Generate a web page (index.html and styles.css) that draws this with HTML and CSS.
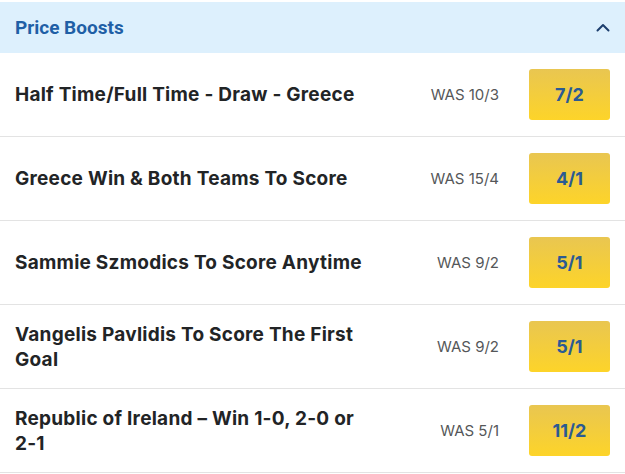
FILE: index.html
```html
<!DOCTYPE html>
<html>
<head>
<meta charset="utf-8">
<link rel="stylesheet" href="styles.css">
</head>
<body>
<div class="panel">
  <div class="header">
    <span class="header-title">Price Boosts</span>
    <svg class="chevron" width="14" height="9" viewBox="0 0 14 9"><path d="M1.5 7.5 L7 2 L12.5 7.5" fill="none" stroke="#1d3f6e" stroke-width="2" stroke-linecap="round" stroke-linejoin="round"/></svg>
  </div>
  <div class="row">
    <div class="title">Half Time/Full Time - Draw - Greece</div>
    <div class="was">WAS 10/3</div>
    <div class="odds">7/2</div>
  </div>
  <div class="row">
    <div class="title">Greece Win &amp; Both Teams To Score</div>
    <div class="was">WAS 15/4</div>
    <div class="odds">4/1</div>
  </div>
  <div class="row">
    <div class="title">Sammie Szmodics To Score Anytime</div>
    <div class="was">WAS 9/2</div>
    <div class="odds">5/1</div>
  </div>
  <div class="row">
    <div class="title">Vangelis Pavlidis To Score The First Goal</div>
    <div class="was">WAS 9/2</div>
    <div class="odds">5/1</div>
  </div>
  <div class="row">
    <div class="title">Republic of Ireland – Win <span class="nb">1-0,</span> <span class="nb">2-0</span> or <span class="nb">2-1</span></div>
    <div class="was">WAS 5/1</div>
    <div class="odds">11/2</div>
  </div>
</div>
</body>
</html>
```
FILE: styles.css
```css
html, body {
  margin: 0;
  padding: 0;
  background: #ffffff;
}
body {
  font-family: Inter, "Noto Sans", sans-serif;
  color: #222426;
}
.panel {
  padding-top: 2px;
  width: 625px;
}
.header {
  height: 51px;
  background: #ddf0fd;
  display: flex;
  align-items: center;
  justify-content: space-between;
  padding: 0 15px;
  box-sizing: border-box;
}
.header-title {
  font-family: Roboto, "Liberation Sans", sans-serif;
  font-weight: 700;
  font-size: 19px;
  color: #1f5fa6;
}
.row {
  display: flex;
  align-items: center;
  height: 84px;
  box-sizing: border-box;
  border-bottom: 1px solid #e3e3e3;
  padding: 0 15px;
}
.title {
  width: 370px;
  font-weight: 700;
  font-size: 19px;
  letter-spacing: 0.25px;
  line-height: 25px;
  color: #222426;
}
.nb {
  white-space: nowrap;
}
.was {
  flex: 1;
  text-align: right;
  font-size: 15px;
  color: #555759;
  margin-right: 30px;
}
.odds {
  width: 81px;
  height: 51px;
  border-radius: 3px;
  background: linear-gradient(to bottom, #e9c651, #fdd429);
  display: flex;
  align-items: center;
  justify-content: center;
  font-weight: 700;
  font-size: 18px;
  color: #2b5a93;
}
```
